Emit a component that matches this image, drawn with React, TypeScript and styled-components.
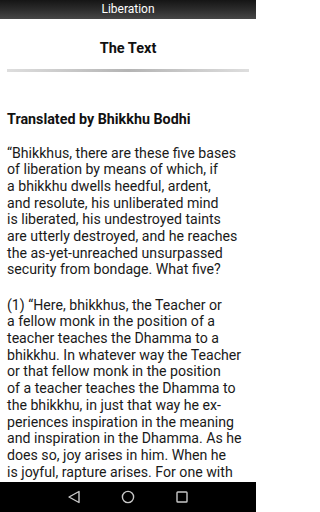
import React from 'react';
import styled, { createGlobalStyle } from 'styled-components';

const para1 = [
  '“Bhikkhus, there are these five bases',
  'of liberation by means of which, if',
  'a bhikkhu dwells heedful, ardent,',
  'and resolute, his unliberated mind',
  'is liberated, his undestroyed taints',
  'are utterly destroyed, and he reaches',
  'the as-yet-unreached unsurpassed',
  'security from bondage. What five?',
];

const para2 = [
  '(1) “Here, bhikkhus, the Teacher or',
  'a fellow monk in the position of a',
  'teacher teaches the Dhamma to a',
  'bhikkhu. In whatever way the Teacher',
  'or that fellow monk in the position',
  'of a teacher teaches the Dhamma to',
  'the bhikkhu, in just that way he ex-',
  'periences inspiration in the meaning',
  'and inspiration in the Dhamma. As he',
  'does so, joy arises in him. When he',
  'is joyful, rapture arises. For one with',
];

const App = (): JSX.Element => {
  return (
    <Screen>
      <GlobalStyle />
      <TopBar>Liberation</TopBar>
      <Content>
        <Title>The Text</Title>
        <Divider />
        <Byline>Translated by Bhikkhu Bodhi</Byline>
        <Paragraph>
          {para1.map((line) => (
            <Line key={line}>{line}</Line>
          ))}
        </Paragraph>
        <Paragraph>
          {para2.map((line) => (
            <Line key={line}>{line}</Line>
          ))}
        </Paragraph>
      </Content>
      <NavBar>
        <NavButton aria-label="Back">
          <svg width="14" height="14" viewBox="0 0 14 14">
            <path d="M12 1.5 L2 7 L12 12.5 Z" fill="none" stroke="#c8c8c8" strokeWidth="1.4" strokeLinejoin="round" />
          </svg>
        </NavButton>
        <NavButton aria-label="Home">
          <svg width="14" height="14" viewBox="0 0 14 14">
            <circle cx="7" cy="7" r="5.6" fill="none" stroke="#c8c8c8" strokeWidth="1.4" />
          </svg>
        </NavButton>
        <NavButton aria-label="Recents">
          <svg width="14" height="14" viewBox="0 0 14 14">
            <rect x="2" y="2" width="10" height="10" rx="0.8" fill="none" stroke="#c8c8c8" strokeWidth="1.4" />
          </svg>
        </NavButton>
      </NavBar>
    </Screen>
  );
};

export default App;

const GlobalStyle = createGlobalStyle`
  html, body {
    margin: 0;
    padding: 0;
    background: #ffffff;
  }
  body {
    font-family: Roboto, "Liberation Sans", sans-serif;
  }
`;

const Screen = styled.div`
  display: flex;
  flex-direction: column;
  width: 256px;
  height: 512px;
  overflow: hidden;
  background: #ffffff;
`;

const TopBar = styled.div`
  flex: 0 0 19px;
  display: flex;
  align-items: center;
  justify-content: center;
  background: linear-gradient(to bottom, #151515 0%, #2c2c2c 50%, #474747 100%);
  color: #ffffff;
  font-size: 12px;
  line-height: 19px;
`;

const Content = styled.div`
  flex: 1;
  overflow: hidden;
  padding: 0 7px;
  color: #111111;
`;

const Title = styled.div`
  padding-top: 20.5px;
  text-align: center;
  font-size: 14.5px;
  font-weight: bold;
  line-height: 18px;
`;

const Divider = styled.div`
  height: 3px;
  margin-top: 11.5px;
  background: linear-gradient(to right, #dedede 0%, #b4b4b4 50%, #dedede 100%);
`;

const Byline = styled.div`
  margin-top: 39px;
  font-size: 14.3px;
  font-weight: bold;
  line-height: 17px;
`;

const Paragraph = styled.div`
  margin-top: 16.5px;
  font-size: 14.15px;
  line-height: 16.7px;
  color: #1a1a1a;

  & + & {
    margin-top: 18.5px;
  }
`;

const Line = styled.div`
  white-space: nowrap;
`;

const NavBar = styled.div`
  flex: 0 0 30px;
  display: flex;
  align-items: center;
  justify-content: center;
  gap: 40px;
  background: #000000;
`;

const NavButton = styled.div`
  display: flex;
  align-items: center;
  justify-content: center;
  width: 14px;
  height: 14px;
`;
